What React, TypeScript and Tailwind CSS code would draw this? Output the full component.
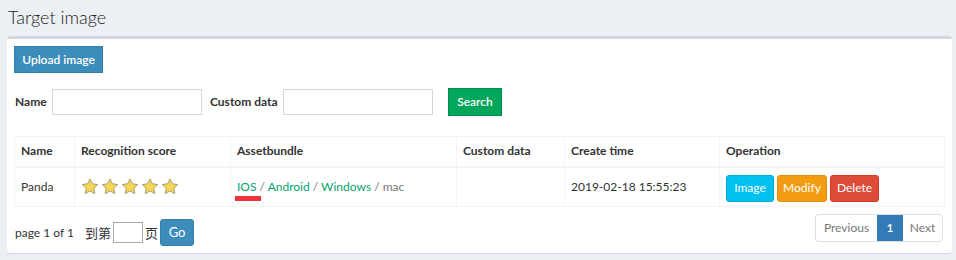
import React from "react";

function Star() {
  return (
    <svg width="18" height="17" viewBox="0 0 24 23" className="block">
      <path
        d="M12 1.2l3.2 6.7 7.3.9-5.4 5 1.4 7.3L12 17.5l-6.5 3.6 1.4-7.3-5.4-5 7.3-.9z"
        fill="#f7d558"
        stroke="#a89a6a"
        strokeWidth="1.3"
        strokeLinejoin="round"
      />
    </svg>
  );
}

const cols = [
  { label: "Name", w: "w-[60px]" },
  { label: "Recognition score", w: "w-[156px]" },
  { label: "Assetbundle", w: "w-[226px]" },
  { label: "Custom data", w: "w-[108px]" },
  { label: "Create time", w: "w-[155px]" },
  { label: "Operation", w: "" },
];

export default function App() {
  return (
    <div
      className="min-h-[260px] w-[956px] bg-[#ecf0f5] text-[12px] text-[#333]"
      style={{ fontFamily: "Lato, 'Open Sans', sans-serif" }}
    >
      <h1 className="px-[8px] pt-[5px] h-[36px] text-[18px] font-light leading-[24px] text-[#222]">
        Target image
      </h1>
      <div className="ml-[7px] w-[945px] rounded-[3px] border-t-[3px] border-[#d2d6de] bg-white p-[7px] shadow-[0_1px_1px_rgba(0,0,0,0.1)]">
        <button className="h-[27px] w-[89px] border border-[#367fa9] bg-[#3c8dbc] text-[12px] font-semibold text-white">
          Upload image
        </button>

        <div className="mt-[15px] flex items-center">
          <label className="w-[38px] pl-[1px] font-bold">Name</label>
          <input className="h-[26px] w-[150px] border border-[#d2d6de] outline-none" />
          <label className="ml-[8px] w-[73px] font-bold">Custom data</label>
          <input className="h-[26px] w-[150px] border border-[#d2d6de] outline-none" />
          <button className="ml-[15px] h-[28px] w-[54px] border border-[#008d4c] bg-[#00a65a] text-[12px] font-semibold text-white">
            Search
          </button>
        </div>

        <table className="mt-[20px] w-full border-collapse border border-[#f4f4f4]">
          <thead>
            <tr className="h-[30px] border-b-2 border-[#f4f4f4]">
              {cols.map((c) => (
                <th
                  key={c.label}
                  className={`${c.w} border border-[#f4f4f4] px-[6px] text-left font-bold`}
                >
                  {c.label}
                </th>
              ))}
            </tr>
          </thead>
          <tbody>
            <tr className="h-[40px] align-top">
              <td className="border border-[#f4f4f4] px-[6px] pt-[10px]">Panda</td>
              <td className="border border-[#f4f4f4] px-[6px] pt-[10px]">
                <div className="flex gap-[2px]">
                  <Star />
                  <Star />
                  <Star />
                  <Star />
                  <Star />
                </div>
              </td>
              <td className="border border-[#f4f4f4] px-[6px] pt-[10px]">
                <span className="relative text-[#0a9f74]">
                  IOS
                  <span className="absolute left-[-2px] top-[17px] h-[5px] w-[26px] bg-[#f0323a]" />
                </span>
                <span className="text-[#777]"> / </span>
                <span className="text-[#0a9f74]">Android</span>
                <span className="text-[#777]"> / </span>
                <span className="text-[#0a9f74]">Windows</span>
                <span className="text-[#777]"> / mac</span>
              </td>
              <td className="border border-[#f4f4f4] px-[6px]"></td>
              <td className="border border-[#f4f4f4] px-[6px] pt-[10px]">2019-02-18 15:55:23</td>
              <td className="border border-[#f4f4f4] px-[6px] pt-[7px]">
                <div className="flex gap-[3px]">
                  <button className="h-[27px] w-[48px] rounded-[3px] border border-[#00acd6] bg-[#00c0ef] text-white">
                    Image
                  </button>
                  <button className="h-[27px] w-[50px] rounded-[3px] border border-[#e08e0b] bg-[#f39c12] text-white">
                    Modify
                  </button>
                  <button className="h-[27px] w-[49px] rounded-[3px] border border-[#d73925] bg-[#dd4b39] text-white">
                    Delete
                  </button>
                </div>
              </td>
            </tr>
          </tbody>
        </table>

        <div className="mt-[7px] flex items-start justify-between">
          <div className="mt-[5px] flex items-center">
            <span className="w-[71px] pl-[1px]">page 1 of 1</span>
            <span className="mr-[2px] text-[13px]" style={{ fontFamily: "'Noto Sans CJK SC', sans-serif" }}>
              到第
            </span>
            <input className="h-[21px] w-[30px] border border-[#a9a9a9] outline-none" />
            <span className="ml-[2px] text-[13px]" style={{ fontFamily: "'Noto Sans CJK SC', sans-serif" }}>
              页
            </span>
            <button className="ml-[2px] h-[27px] w-[34px] rounded-[3px] border border-[#367fa9] bg-[#3c8dbc] text-[13px] text-white">
              Go
            </button>
          </div>
          <div className="mr-[2px] flex h-[28px] overflow-hidden rounded-[4px] border border-[#ddd] text-[#777]">
            <span className="flex w-[61px] items-center justify-center">Previous</span>
            <span className="flex w-[26px] items-center justify-center bg-[#337ab7] font-semibold text-white">1</span>
            <span className="flex w-[39px] items-center justify-center">Next</span>
          </div>
        </div>
      </div>
    </div>
  );
}
